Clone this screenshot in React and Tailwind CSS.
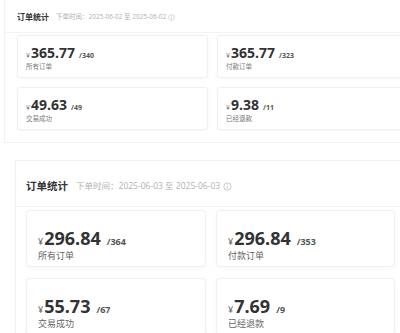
import React from "react";

const FONT = { fontFamily: '"Open Sans", "Noto Sans CJK SC", sans-serif' };

const TOP = {
  date: "2025-06-02",
  cards: [
    { amount: "365.77", count: "340", label: "所有订单" },
    { amount: "365.77", count: "323", label: "付款订单" },
    { amount: "49.63", count: "49", label: "交易成功" },
    { amount: "9.38", count: "11", label: "已经退款" },
  ],
};

const BOTTOM = {
  date: "2025-06-03",
  cards: [
    { amount: "296.84", count: "364", label: "所有订单" },
    { amount: "296.84", count: "353", label: "付款订单" },
    { amount: "55.73", count: "67", label: "交易成功" },
    { amount: "7.69", count: "9", label: "已经退款" },
  ],
};

function InfoIcon({ size }) {
  return (
    <svg width={size} height={size} viewBox="0 0 16 16" fill="none" stroke="#b5b5b5" strokeWidth="1.3">
      <circle cx="8" cy="8" r="6.5" />
      <line x1="8" y1="7" x2="8" y2="11.5" />
      <circle cx="8" cy="4.8" r="0.6" fill="#b5b5b5" stroke="none" />
    </svg>
  );
}

function SmallCard({ card }) {
  return (
    <div className="h-[43px] rounded-[3px] border border-[#f0f0f0] bg-white shadow-[0_1px_3px_rgba(0,0,0,0.04)] pl-[8px] pt-[10px]">
      <div className="flex items-baseline text-[#333] leading-none">
        <span className="text-[7px] text-[#666] mr-[1px]">¥</span>
        <span className="text-[14px] font-bold">{card.amount}</span>
        <span className="text-[7px] font-bold ml-[4px] text-[#555]">/{card.count}</span>
      </div>
      <div className="mt-[4px] text-[6.5px] leading-none text-[#777]">{card.label}</div>
    </div>
  );
}

function BigCard({ card }) {
  return (
    <div className="h-[57px] rounded-[4px] border border-[#f0f0f0] bg-white shadow-[0_1px_4px_rgba(0,0,0,0.04)] pl-[11px] pt-[18px]">
      <div className="flex items-baseline text-[#333] leading-none">
        <span className="text-[9px] text-[#666] mr-[1px]">¥</span>
        <span className="text-[18px] font-bold">{card.amount}</span>
        <span className="text-[9px] font-bold ml-[6px] text-[#555]">/{card.count}</span>
      </div>
      <div className="mt-[4px] text-[9px] leading-none text-[#666]">{card.label}</div>
    </div>
  );
}

export default function App() {
  return (
    <div className="w-[400px] h-[333px] overflow-hidden bg-white" style={FONT}>
      {/* Top (small) panel */}
      <div className="ml-[4px] h-[143px] border-l border-b border-[#f2f2f2] bg-white">
        <div className="h-[33px] flex items-center pl-[12px] pt-[2px] border-b border-[#f3f3f3]">
          <span className="text-[8px] font-bold text-[#333]">订单统计</span>
          <span className="ml-[7px] text-[6.5px] text-[#b0b0b0]">下单时间：{TOP.date} 至 {TOP.date}</span>
          <span className="ml-[2px] flex"><InfoIcon size={7} /></span>
        </div>
        <div className="grid grid-cols-[191px_191px] gap-[9px] pl-[12px] pt-[2px]">
          {TOP.cards.map((c, i) => (
            <SmallCard key={i} card={c} />
          ))}
        </div>
      </div>

      {/* Bottom (large) panel */}
      <div className="mt-[17px] ml-[15px] border-t border-l border-[#f0f0f0] bg-white">
        <div className="h-[46px] flex items-center pl-[10px] pt-[6px] border-b border-[#f3f3f3]">
          <span className="text-[10.5px] font-bold text-[#333]">订单统计</span>
          <span className="ml-[8px] text-[8.5px] text-[#b0b0b0]">下单时间：{BOTTOM.date} 至 {BOTTOM.date}</span>
          <span className="ml-[3px] flex"><InfoIcon size={9} /></span>
        </div>
        <div className="grid grid-cols-[180px_179px] gap-x-[10px] gap-y-[11px] pl-[10px] pt-[3px]">
          {BOTTOM.cards.map((c, i) => (
            <BigCard key={i} card={c} />
          ))}
        </div>
      </div>
    </div>
  );
}
